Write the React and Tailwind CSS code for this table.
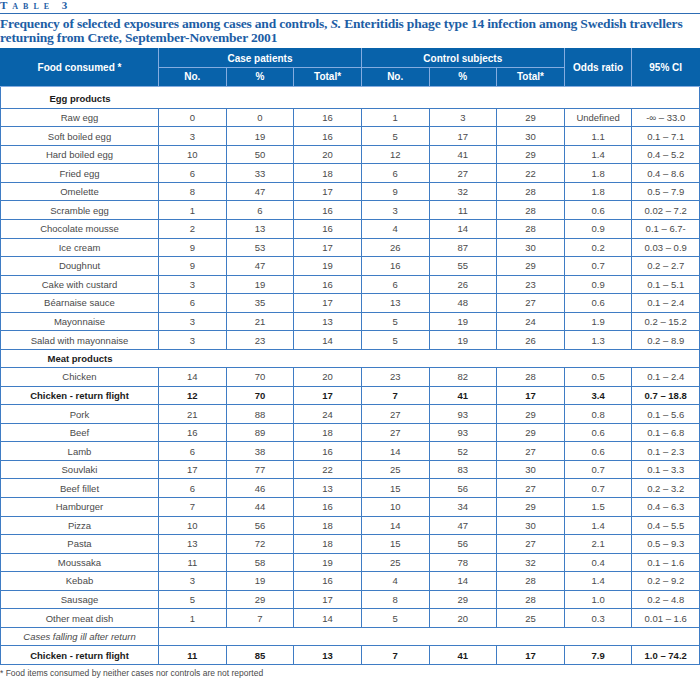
import React from 'react';

const egg = [
  ['Raw egg', '0', '0', '16', '1', '3', '29', 'Undefined', '-∞ – 33.0'],
  ['Soft boiled egg', '3', '19', '16', '5', '17', '30', '1.1', '0.1 – 7.1'],
  ['Hard boiled egg', '10', '50', '20', '12', '41', '29', '1.4', '0.4 – 5.2'],
  ['Fried egg', '6', '33', '18', '6', '27', '22', '1.8', '0.4 – 8.6'],
  ['Omelette', '8', '47', '17', '9', '32', '28', '1.8', '0.5 – 7.9'],
  ['Scramble egg', '1', '6', '16', '3', '11', '28', '0.6', '0.02 – 7.2'],
  ['Chocolate mousse', '2', '13', '16', '4', '14', '28', '0.9', '0.1 – 6.7-'],
  ['Ice cream', '9', '53', '17', '26', '87', '30', '0.2', '0.03 – 0.9'],
  ['Doughnut', '9', '47', '19', '16', '55', '29', '0.7', '0.2 – 2.7'],
  ['Cake with custard', '3', '19', '16', '6', '26', '23', '0.9', '0.1 – 5.1'],
  ['Béarnaise sauce', '6', '35', '17', '13', '48', '27', '0.6', '0.1 – 2.4'],
  ['Mayonnaise', '3', '21', '13', '5', '19', '24', '1.9', '0.2 – 15.2'],
  ['Salad with mayonnaise', '3', '23', '14', '5', '19', '26', '1.3', '0.2 – 8.9'],
];

const meat = [
  ['Chicken', '14', '70', '20', '23', '82', '28', '0.5', '0.1 – 2.4'],
  ['Chicken - return flight', '12', '70', '17', '7', '41', '17', '3.4', '0.7 – 18.8', true],
  ['Pork', '21', '88', '24', '27', '93', '29', '0.8', '0.1 – 5.6'],
  ['Beef', '16', '89', '18', '27', '93', '29', '0.6', '0.1 – 6.8'],
  ['Lamb', '6', '38', '16', '14', '52', '27', '0.6', '0.1 – 2.3'],
  ['Souvlaki', '17', '77', '22', '25', '83', '30', '0.7', '0.1 – 3.3'],
  ['Beef fillet', '6', '46', '13', '15', '56', '27', '0.7', '0.2 – 3.2'],
  ['Hamburger', '7', '44', '16', '10', '34', '29', '1.5', '0.4 – 6.3'],
  ['Pizza', '10', '56', '18', '14', '47', '30', '1.4', '0.4 – 5.5'],
  ['Pasta', '13', '72', '18', '15', '56', '27', '2.1', '0.5 – 9.3'],
  ['Moussaka', '11', '58', '19', '25', '78', '32', '0.4', '0.1 – 1.6'],
  ['Kebab', '3', '19', '16', '4', '14', '28', '1.4', '0.2 – 9.2'],
  ['Sausage', '5', '29', '17', '8', '29', '28', '1.0', '0.2 – 4.8'],
  ['Other meat dish', '1', '7', '14', '5', '20', '25', '0.3', '0.01 – 1.6'],
];

const cell = 'border border-[#3f7cc4] p-0 text-center align-middle';

function DataRow({ row }) {
  const bold = row[9];
  return (
    <tr className="h-[18.55px]">
      {row.slice(0, 9).map((v, i) => (
        <td key={i} className={`${cell} ${bold ? 'font-bold text-[#1a1a1a]' : 'text-[#4a4a4a]'}`}>
          {v}
        </td>
      ))}
    </tr>
  );
}

function SectionRow({ label, tall }) {
  return (
    <tr className={tall ? 'h-[22px]' : 'h-[18.4px]'}>
      <td colSpan={9} className="border border-[#3f7cc4] border-t-0 p-0">
        <div className={`w-[158px] text-center font-bold text-[#1a1a1a] ${tall ? 'pt-[2px]' : ''}`}>{label}</div>
      </td>
    </tr>
  );
}

export default function App() {
  return (
    <div className="w-[700px] h-[681px] bg-white overflow-hidden font-['Liberation_Sans',sans-serif]">
      <div className="h-[13px] font-['Liberation_Serif',serif] font-bold text-[#1d5ea5] text-[11px] leading-[11px] tracking-[5px] [font-variant:small-caps]">
        Table 3
      </div>
      <div className="border-t border-[#2e6db4] pt-[3px] font-['Liberation_Serif',serif] font-bold text-[#1d5ea5] text-[13.5px] leading-[13.5px] tracking-[-0.18px]">
        Frequency of selected exposures among cases and controls, <i>S.</i> Enteritidis phage type 14 infection among Swedish travellers
        <br />
        returning from Crete, September-November 2001
      </div>
      <table className="mt-[4px] w-[700px] table-fixed border-collapse text-[9.5px] leading-[11px]">
        <colgroup>
          <col className="w-[158px]" />
          <col /><col /><col /><col /><col /><col /><col /><col />
        </colgroup>
        <thead className="bg-[#0862aa] text-white font-bold text-[10px]">
          <tr className="h-[19.3px]">
            <th rowSpan={2} className="border border-[#84ace0] border-l-[#0862aa] border-t-[#0862aa] font-bold">Food consumed *</th>
            <th colSpan={3} className="border border-[#84ace0] border-t-[#0862aa] font-bold">Case patients</th>
            <th colSpan={3} className="border border-[#84ace0] border-t-[#0862aa] font-bold">Control subjects</th>
            <th rowSpan={2} className="border border-[#84ace0] border-t-[#0862aa] font-bold">Odds ratio</th>
            <th rowSpan={2} className="border border-[#84ace0] border-t-[#0862aa] border-r-[#0862aa] font-bold">95% CI</th>
          </tr>
          <tr className="h-[18.4px]">
            <th className="border border-[#84ace0] font-bold">No.</th>
            <th className="border border-[#84ace0] font-bold">%</th>
            <th className="border border-[#84ace0] font-bold">Total*</th>
            <th className="border border-[#84ace0] font-bold">No.</th>
            <th className="border border-[#84ace0] font-bold">%</th>
            <th className="border border-[#84ace0] font-bold">Total*</th>
          </tr>
        </thead>
        <tbody>
          <SectionRow label="Egg products" tall />
          {egg.map((r) => <DataRow key={r[0]} row={r} />)}
          <SectionRow label="Meat products" />
          {meat.map((r) => <DataRow key={r[0]} row={r} />)}
          <tr className="h-[18.55px]">
            <td className={`${cell} italic text-[#4a4a4a]`}>Cases falling ill after return</td>
            <td colSpan={8} className={cell}></td>
          </tr>
          <DataRow row={['Chicken - return flight', '11', '85', '13', '7', '41', '17', '7.9', '1.0 – 74.2', true]} />
        </tbody>
      </table>
      <div className="pt-[3px] text-[8.5px] leading-[10px] text-[#4a4a4a]">
        * Food items consumed by neither cases nor controls are not reported
      </div>
    </div>
  );
}
